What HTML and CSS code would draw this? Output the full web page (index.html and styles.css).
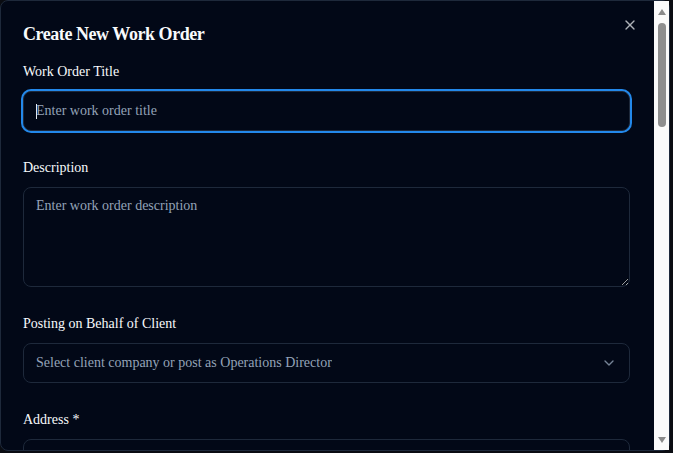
FILE: index.html
```html
<!DOCTYPE html>
<html lang="en">
<head>
<meta charset="utf-8">
<title>Create New Work Order</title>
<link rel="stylesheet" href="styles.css">
</head>
<body>
<div class="backdrop">
  <div class="dialog" role="dialog" aria-labelledby="dlg-title">
    <div class="dialog-body">
      <h2 class="dialog-title" id="dlg-title">Create New Work Order</h2>
      <button class="close-btn" type="button" aria-label="Close">
        <svg width="16" height="16" viewBox="0 0 24 24" fill="none" stroke="currentColor" stroke-width="2" stroke-linecap="round" stroke-linejoin="round"><path d="M18 6 6 18"/><path d="m6 6 12 12"/></svg>
      </button>
      <form class="form">
        <div class="field">
          <label class="label" for="wo-title">Work Order Title</label>
          <div class="input-wrap">
            <input class="control is-focused" id="wo-title" type="text" placeholder="Enter work order title">
            <span class="caret"></span>
          </div>
        </div>
        <div class="field">
          <label class="label" for="wo-desc">Description</label>
          <textarea class="control textarea" id="wo-desc" placeholder="Enter work order description"></textarea>
        </div>
        <div class="field">
          <label class="label">Posting on Behalf of Client</label>
          <button class="control select" type="button">
            <span class="select-value">Select client company or post as Operations Director</span>
            <svg class="chevron" width="16" height="16" viewBox="0 0 24 24" fill="none" stroke="currentColor" stroke-width="2" stroke-linecap="round" stroke-linejoin="round"><path d="m6 9 6 6 6-6"/></svg>
          </button>
        </div>
        <div class="field">
          <label class="label" for="wo-address">Address *</label>
          <input class="control" id="wo-address" type="text" placeholder="Start typing an address">
        </div>
        <div class="field-row">
          <div class="field">
            <label class="label" for="wo-city">City</label>
            <input class="control" id="wo-city" type="text" placeholder="City">
          </div>
          <div class="field">
            <label class="label" for="wo-state">State</label>
            <input class="control" id="wo-state" type="text" placeholder="State">
          </div>
          <div class="field">
            <label class="label" for="wo-zip">ZIP Code</label>
            <input class="control" id="wo-zip" type="text" placeholder="ZIP">
          </div>
        </div>
        <div class="field">
          <label class="label">Category</label>
          <button class="control select" type="button">
            <span class="select-value">Select a category</span>
            <svg class="chevron" width="16" height="16" viewBox="0 0 24 24" fill="none" stroke="currentColor" stroke-width="2" stroke-linecap="round" stroke-linejoin="round"><path d="m6 9 6 6 6-6"/></svg>
          </button>
        </div>
        <div class="field">
          <label class="label">Priority</label>
          <button class="control select" type="button">
            <span class="select-value">Select priority</span>
            <svg class="chevron" width="16" height="16" viewBox="0 0 24 24" fill="none" stroke="currentColor" stroke-width="2" stroke-linecap="round" stroke-linejoin="round"><path d="m6 9 6 6 6-6"/></svg>
          </button>
        </div>
        <div class="field-row two">
          <div class="field">
            <label class="label" for="wo-budget">Budget ($)</label>
            <input class="control" id="wo-budget" type="text" placeholder="0.00">
          </div>
          <div class="field">
            <label class="label" for="wo-due">Due Date</label>
            <input class="control" id="wo-due" type="text" placeholder="mm/dd/yyyy">
          </div>
        </div>
        <div class="field">
          <label class="label" for="wo-notes">Special Instructions</label>
          <textarea class="control textarea" id="wo-notes" placeholder="Access codes, parking, safety notes..."></textarea>
        </div>
        <div class="actions">
          <button class="btn btn-outline" type="button">Cancel</button>
          <button class="btn btn-primary" type="button">Create Work Order</button>
        </div>
      </form>
    </div>
    <div class="scrollbar" aria-hidden="true">
      <span class="arrow arrow-up"></span>
      <span class="thumb"></span>
      <span class="arrow arrow-down"></span>
    </div>
  </div>
</div>
</body>
</html>
```

FILE: styles.css
```css
* {
  box-sizing: border-box;
}

html, body {
  margin: 0;
  padding: 0;
  height: 100%;
}

body {
  background: #0a0c12;
  font-family: "Liberation Serif", "Times New Roman", serif;
  color: #f8fafc;
  overflow: hidden;
}

.backdrop {
  height: 453px;
}

.dialog {
  display: flex;
  width: 670px;
  height: 451px;
  background: #020817;
  border: 1px solid #1e293b;
  border-radius: 8px;
}

.dialog-body {
  position: relative;
  flex: 1;
  min-width: 0;
  overflow: hidden;
  border-radius: 8px 0 0 8px;
  padding: 24px 24px 24px 22px;
}

.dialog-title {
  margin: 0;
  font-size: 18px;
  line-height: 18px;
  font-weight: 700;
  letter-spacing: -0.025em;
  color: #f8fafc;
}

.close-btn {
  position: absolute;
  top: 16px;
  right: 16px;
  width: 16px;
  height: 16px;
  padding: 0;
  border: 0;
  background: transparent;
  color: #f8fafc;
  opacity: 0.7;
  display: flex;
}

.form {
  margin-top: 22px;
  display: flex;
  flex-direction: column;
  gap: 30px;
}

.field {
  display: flex;
  flex-direction: column;
  gap: 12px;
  min-width: 0;
}

.field-row {
  display: grid;
  grid-template-columns: 1fr 1fr 1fr;
  gap: 16px;
}

.field-row.two {
  grid-template-columns: 1fr 1fr;
}

.label {
  font-size: 14px;
  line-height: 14px;
  font-weight: 500;
  color: #f8fafc;
}

.input-wrap {
  position: relative;
}

.caret {
  position: absolute;
  left: 13px;
  top: 13px;
  width: 1px;
  height: 15px;
  background: #e2e8f0;
}

.control {
  display: flex;
  width: 100%;
  height: 40px;
  border: 1px solid #1e293b;
  border-radius: 8px;
  background: #020817;
  padding: 8px 12px;
  font-family: "Liberation Serif", "Times New Roman", serif;
  font-size: 14px;
  line-height: 20px;
  color: #f8fafc;
  outline: none;
}

.control::placeholder {
  color: #94a3b8;
}

.control.is-focused {
  box-shadow: 0 0 0 2px #2388ea;
}

.textarea {
  height: 100px;
  resize: vertical;
}

.select {
  align-items: center;
  justify-content: space-between;
  text-align: left;
  cursor: pointer;
}

.select-value {
  color: #94a3b8;
  white-space: nowrap;
  overflow: hidden;
  text-overflow: ellipsis;
}

.chevron {
  flex: none;
  color: #94a3b8;
  opacity: 0.8;
}

.actions {
  display: flex;
  justify-content: flex-end;
  gap: 8px;
}

.btn {
  height: 40px;
  padding: 0 16px;
  border-radius: 8px;
  font-family: "Liberation Serif", "Times New Roman", serif;
  font-size: 14px;
}

.btn-outline {
  background: #020817;
  color: #f8fafc;
  border: 1px solid #1e293b;
}

.btn-primary {
  background: #f8fafc;
  color: #0f172a;
  border: 0;
}

/* rendered scrollbar of the dialog */
.scrollbar {
  flex: none;
  width: 15px;
  background: #fafafa;
  display: flex;
  flex-direction: column;
  align-items: center;
  padding: 8px 0 7px;
}

.arrow {
  width: 0;
  height: 0;
  border-left: 4.5px solid transparent;
  border-right: 4.5px solid transparent;
}

.arrow-up {
  border-bottom: 6px solid #8a8a8a;
}

.arrow-down {
  margin-top: auto;
  border-top: 6px solid #8a8a8a;
}

.thumb {
  margin-top: 8px;
  width: 8px;
  height: 104px;
  border-radius: 4px;
  background: #8e8e8e;
}
```
